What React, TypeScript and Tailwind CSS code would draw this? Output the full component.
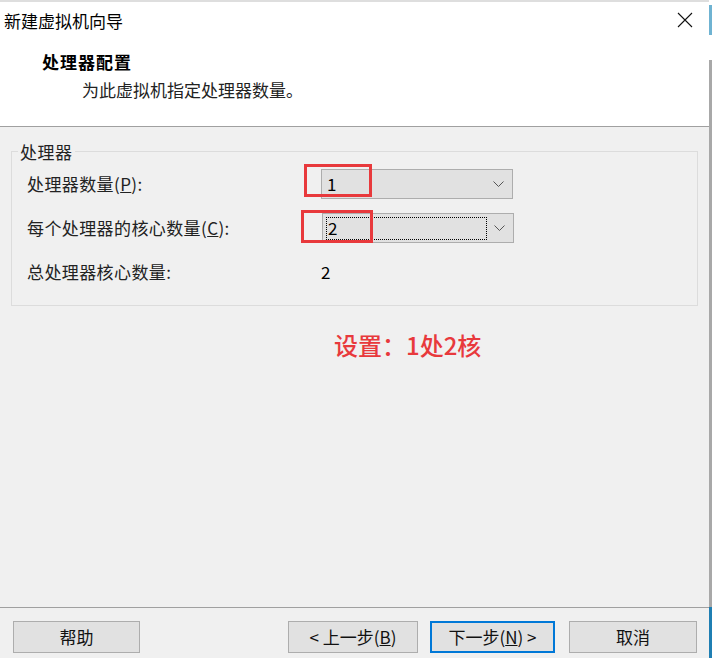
import React from "react";

const font = { fontFamily: '"Microsoft YaHei", "Noto Sans CJK SC", "Noto Sans", sans-serif' };

function Combo({ value, focused }: { value: string; focused?: boolean }) {
  return (
    <div className="relative h-[30px] w-[192px] border border-[#adadad] bg-[#e1e1e1] flex items-center">
      <div
        className={
          "ml-[3px] h-[23px] w-[161px] flex items-center pl-[1px] text-[17px] text-black " +
          (focused ? "border border-dotted border-black" : "border border-transparent")
        }
      >
        {value}
      </div>
      <svg className="absolute right-[8px] top-[11px] w-[11px] h-[7px]" viewBox="0 0 11 7" fill="none" stroke="#555" strokeWidth="1">
        <path d="M0.5 0.5 L5.5 5.5 L10.5 0.5" />
      </svg>
    </div>
  );
}

function Btn({ children, primary }: { children: React.ReactNode; primary?: boolean }) {
  return (
    <button
      className={
        "h-[32px] bg-[#e1e1e1] text-[17px] text-[#111] flex items-center justify-center " +
        (primary ? "border-2 border-[#0078d7]" : "border border-[#adadad]")
      }
    >
      {children}
    </button>
  );
}

export default function App() {
  return (
    <div className="w-[712px] h-[658px] flex overflow-hidden bg-white" style={font}>
      <div className="w-[709px] h-full flex flex-col">
        {/* Header */}
        <div className="h-[2px] bg-[#dedede]" />
        <div className="h-[125px] bg-white border-b border-[#a0a0a0] flex flex-col">
          <div className="h-[36px] flex items-center justify-between pl-[4px] pr-[16px]">
            <span className="text-[17px] text-black leading-none">新建虚拟机向导</span>
            <svg className="w-[16px] h-[16px]" viewBox="0 0 16 16" fill="none" stroke="#111" strokeWidth="1.1">
              <path d="M1 1 L15 15 M15 1 L1 15" />
            </svg>
          </div>
          <div className="pl-[42px] mt-[15px] text-[17px] tracking-[1px] font-bold text-black leading-none">处理器配置</div>
          <div className="pl-[82px] mt-[11px] text-[17px] text-[#222] leading-none">为此虚拟机指定处理器数量。</div>
        </div>

        {/* Body */}
        <div className="flex-1 bg-[#f0f0f0] flex flex-col">
          <fieldset className="mx-[11px] mt-[15px] h-[164px] border border-[#dcdcdc] pl-[15px] pr-[15px]">
            <legend className="ml-[-9px] text-[17px] text-[#222] leading-[19px] px-[2px] tracking-[0.5px]">处理器</legend>
            <div className="flex flex-col">
              <div className="h-[30px] mt-[8px] flex items-center">
                <span className="w-[294px] text-[17px] tracking-[0.4px] text-[#222]">
                  处理器数量(<span className="underline">P</span>):
                </span>
                <div className="relative">
                  <Combo value="1" />
                  <div className="absolute left-[-17px] top-[-5px] w-[68px] h-[33px] border-[3px] border-[#e8393c]" />
                </div>
              </div>
              <div className="h-[30px] mt-[14px] flex items-center">
                <span className="w-[295px] text-[17px] tracking-[0.4px] text-[#222]">
                  每个处理器的核心数量(<span className="underline">C</span>):
                </span>
                <div className="relative">
                  <Combo value="2" focused />
                  <div className="absolute left-[-21px] top-[-3px] w-[72px] h-[33px] border-[3px] border-[#e8393c]" />
                </div>
              </div>
              <div className="h-[30px] mt-[14px] flex items-center">
                <span className="w-[294px] text-[17px] tracking-[0.4px] text-[#222]">总处理器核心数量:</span>
                <span className="text-[17px] text-black">2</span>
              </div>
            </div>
          </fieldset>

          <div className="mt-[27px] pl-[334px] text-[24px] font-medium text-[#e8393c] leading-none">设置：1处2核</div>

          <div className="flex-1" />

          {/* Footer */}
          <div className="h-[51px] border-t border-[#a0a0a0] flex items-start pt-[13px] pl-[13px] pr-[12px]">
            <div className="w-[127px]">
              <Btn>
                <span className="w-[125px]">帮助</span>
              </Btn>
            </div>
            <div className="flex-1" />
            <div className="w-[130px]">
              <Btn>
                <span className="w-[128px]">
                  &lt; 上一步(<span className="underline">B</span>)
                </span>
              </Btn>
            </div>
            <div className="w-[125px] ml-[12px]">
              <Btn primary>
                <span className="w-[121px]">
                  下一步(<span className="underline">N</span>) &gt;
                </span>
              </Btn>
            </div>
            <div className="w-[128px] ml-[14px]">
              <Btn>
                <span className="w-[126px]">取消</span>
              </Btn>
            </div>
          </div>
        </div>
      </div>

      {/* Right window edge */}
      <div className="w-[3px] h-full flex flex-col">
        <div className="h-[5px] bg-white" />
        <div className="h-[30px] bg-[#6fb3d2]" />
        <div className="h-[25px] bg-white" />
        <div className="flex-1 bg-[#a8a8a8]" />
        <div className="h-[51px] bg-[#1f7fb3]" />
      </div>
    </div>
  );
}
